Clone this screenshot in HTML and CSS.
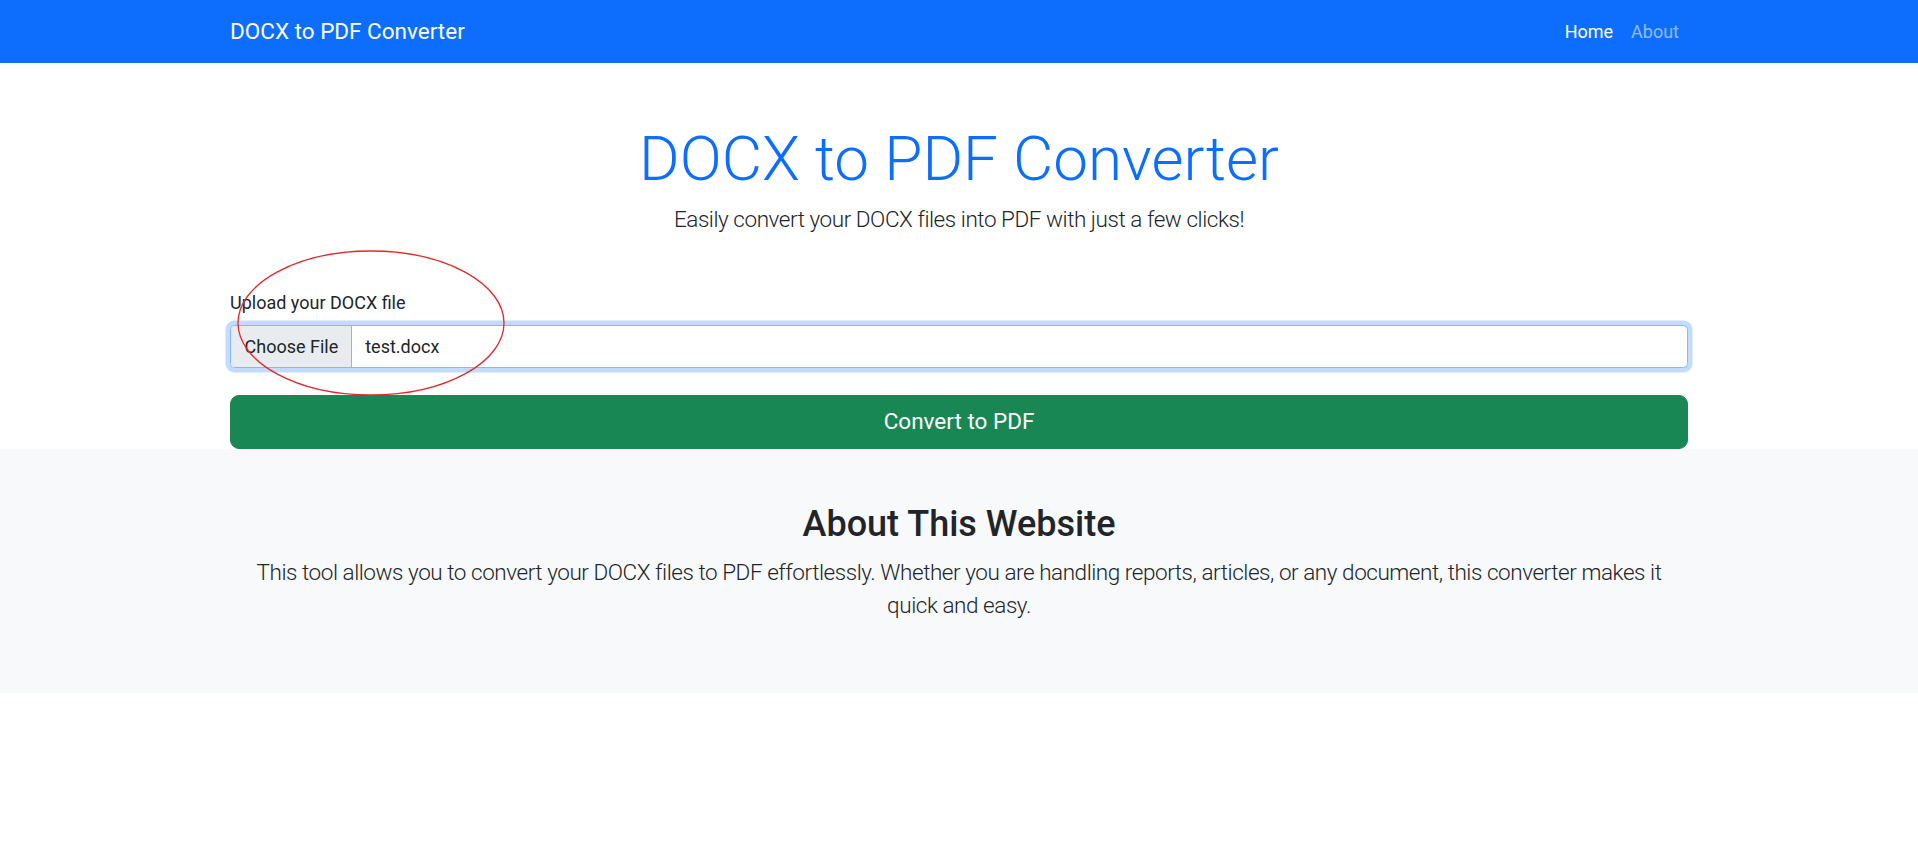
FILE: index.html
```html
<!DOCTYPE html>
<html lang="en">
<head>
<meta charset="utf-8">
<title>DOCX to PDF Converter</title>
<link rel="stylesheet" href="styles.css">
</head>
<body>
<nav class="navbar">
  <div class="container nav-inner">
    <a class="brand" href="#">DOCX to PDF Converter</a>
    <ul class="nav-links">
      <li><a class="nav-link active" href="#">Home</a></li>
      <li><a class="nav-link" href="#">About</a></li>
    </ul>
  </div>
</nav>

<main class="container hero">
  <div class="hero-head">
    <h1 class="title">DOCX to PDF Converter</h1>
    <p class="lead">Easily convert your DOCX files into PDF with just a few clicks!</p>
  </div>
  <form class="upload-form">
    <div class="field">
      <label class="form-label">Upload your DOCX file</label>
      <div class="file-input">
        <span class="file-btn">Choose File</span>
        <span class="file-name">test.docx</span>
      </div>
    </div>
    <button type="button" class="btn-convert">Convert to PDF</button>
  </form>
</main>

<section class="about">
  <div class="container about-inner">
    <h2 class="about-title">About This Website</h2>
    <p class="lead about-text">This tool allows you to convert your DOCX files to PDF effortlessly. Whether you are handling reports, articles, or any document, this converter makes it quick and easy.</p>
  </div>
</section>

<svg class="annotation" width="270" height="148" viewBox="0 0 270 148" aria-hidden="true">
  <ellipse cx="135" cy="74" rx="133" ry="72" fill="none" stroke="#e02a2a" stroke-width="1.3"/>
</svg>
</body>
</html>
```

FILE: styles.css
```css
* { box-sizing: border-box; }

html, body { margin: 0; padding: 0; }

body {
  position: relative;
  font-family: Roboto, "Liberation Sans", Arial, sans-serif;
  font-size: 18px;
  line-height: 1.5;
  color: #212529;
  background: #fff;
}

.container {
  width: 100%;
  max-width: 1485px;
  margin-left: auto;
  margin-right: auto;
  padding-left: 13.5px;
  padding-right: 13.5px;
}

/* Navbar */
.navbar {
  background: #0d6efd;
  padding: 9px 0;
}
.nav-inner {
  display: flex;
  align-items: center;
  justify-content: space-between;
}
.brand {
  color: #fff;
  text-decoration: none;
  font-size: 22.5px;
  line-height: 33.75px;
  padding: 5.6px 0;
}
.nav-links {
  list-style: none;
  margin: 0;
  padding: 0;
  display: flex;
}
.nav-link {
  display: block;
  padding: 9px;
  color: rgba(255, 255, 255, 0.55);
  text-decoration: none;
  font-size: 18px;
  line-height: 27px;
}
.nav-link.active { color: #fff; }

/* Hero */
.hero { margin-top: 58px; }
.hero-head { text-align: center; }
.title {
  margin: 0 0 6px;
  font-size: 62px;
  font-weight: 300;
  line-height: 75.6px;
  color: #0d6efd;
}
.lead {
  font-size: 22.5px;
  font-weight: 300;
  line-height: 1.5;
  letter-spacing: -0.45px;
  margin: 0 0 18px;
}

.upload-form { margin-top: 53px; }
.field { margin-bottom: 27px; }
.form-label {
  display: block;
  margin-bottom: 9px;
  font-size: 18px;
  line-height: 27px;
}
.file-input {
  display: flex;
  align-items: stretch;
  height: 43px;
  border: 1px solid #86b7fe;
  border-radius: 4.5px;
  background: #fff;
  box-shadow: 0 0 0 4.5px rgba(13, 110, 253, 0.25);
  overflow: hidden;
}
.file-btn {
  display: flex;
  align-items: center;
  padding: 0 13px 0 13.5px;
  background: #e9ecef;
  border-right: 1px solid #86b7fe;
  color: #212529;
}
.file-name {
  display: flex;
  align-items: center;
  padding-left: 13px;
}

.btn-convert {
  display: block;
  width: 100%;
  height: 54px;
  padding: 9px 18px;
  border: 1px solid #198754;
  border-radius: 9px;
  background: #198754;
  color: #fff;
  font-family: inherit;
  font-size: 22.5px;
  line-height: 33.75px;
  cursor: pointer;
}

/* About */
.about {
  background: #f8f9fa;
  padding: 54px 0 52px;
}
.about-inner { text-align: center; }
.about-title {
  margin: 0 0 9px;
  font-size: 36px;
  font-weight: 500;
  line-height: 1.2;
}
.about-text { margin-bottom: 18px; }

/* Annotation overlay drawn on top of the screenshot */
.annotation {
  position: absolute;
  left: 236px;
  top: 249px;
  pointer-events: none;
}
```
